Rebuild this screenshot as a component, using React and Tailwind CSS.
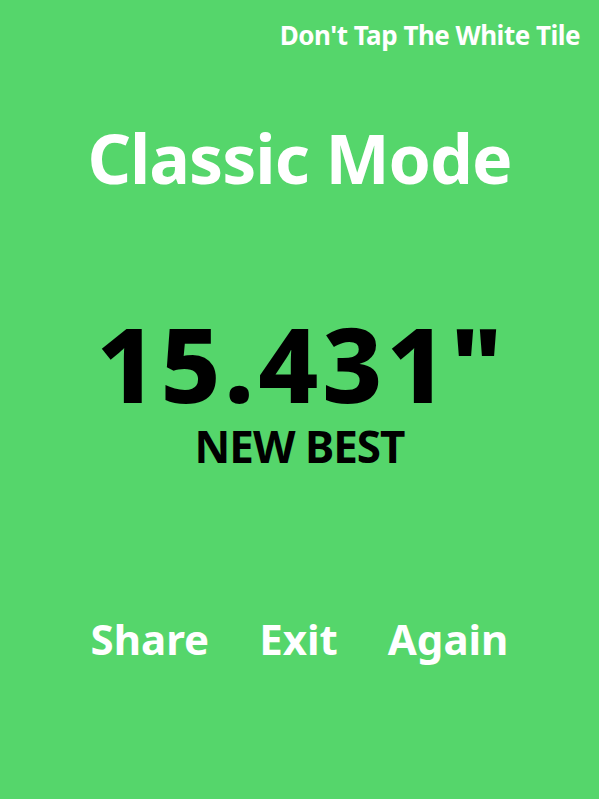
export default function App() {
  const font = { fontFamily: '"Noto Sans", "Open Sans", sans-serif' };
  return (
    <div
      className="w-[599px] h-[799px] bg-[#55d66b] flex flex-col overflow-hidden"
      style={font}
    >
      {/* header */}
      <div className="flex justify-end pr-[19px] pt-[16px]">
        <span className="text-white font-bold text-[26px] leading-[38px] tracking-[-0.5px]">
          Don't Tap The White Tile
        </span>
      </div>

      <h1 className="mt-[64px] text-center text-white font-bold text-[68px] leading-[80px] tracking-[-1px]">
        Classic Mode
      </h1>

      {/* result */}
      <div className="mt-[113px] flex flex-col items-center">
        <div className="text-black font-extrabold text-[104px] leading-[104px] tracking-[4px] pl-[4px]">
          15.431"
        </div>
        <div className="mt-[5px] text-black font-bold text-[44px] leading-[52px] tracking-[-1px]">
          NEW BEST
        </div>
      </div>

      <div className="mt-[139px] flex justify-center gap-[50px] text-white font-bold text-[42px] leading-[56px]">
        <button className="font-bold">Share</button>
        <button className="font-bold">Exit</button>
        <button className="font-bold">Again</button>
      </div>
    </div>
  );
}
